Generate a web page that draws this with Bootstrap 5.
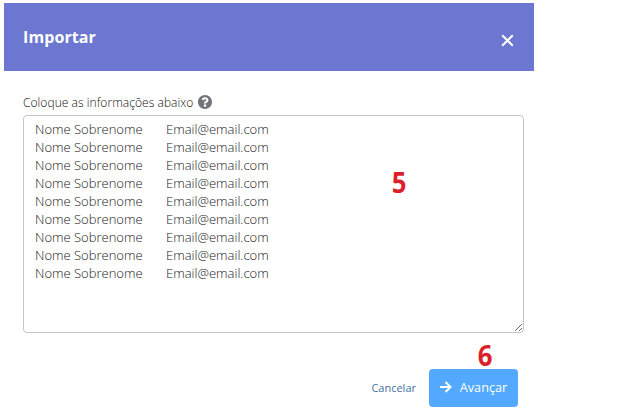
<!DOCTYPE html>
<html lang="pt-BR">
<head>
<meta charset="utf-8">
<meta name="viewport" content="width=device-width, initial-scale=1">
<title>Importar</title>
<link href="https://cdn.jsdelivr.net/npm/bootstrap@5.3.0/dist/css/bootstrap.min.css" rel="stylesheet">
<style>
body{font-family:"Open Sans",sans-serif;background:#fff;overflow:hidden}
.import-dialog{width:530px;height:407px;margin:3px 0 0 4px}
.import-header{height:68px;background:#6b77d0;padding:0 20px 0 19px}
.import-title{font-size:16px;font-weight:700;line-height:22px;letter-spacing:.1px}
.import-close{line-height:0;margin-top:6px}
.import-body{padding:23px 10px 0 19px}
.import-label{font-size:12px;font-weight:300;line-height:18px;letter-spacing:.05px;color:#111;gap:5px}
.import-label svg{margin-bottom:2px}
.import-text{height:218px;margin-top:3px;font-size:13px;font-weight:300;line-height:18px;padding:4px 11px;color:#222;border:1px solid #c4c4c4;border-radius:4px;tab-size:131px;resize:vertical}
.import-footer{margin-top:36px;padding-right:16px;gap:13px}
.import-cancel{font-size:11px;color:#44729e}
.import-next{width:89px;height:38px;font-size:12.7px;background:#52a9ff;color:#fff;border-radius:4px;gap:8px}
.import-next svg{margin-bottom:2px}
.step-mark{position:absolute;font-size:28px;line-height:30px;font-weight:700;color:#dc1f2b;transform:scaleX(.92)}
.step-five{left:391px;top:167px}
.step-six{left:477px;top:340px}
</style>
<script src="https://cdn.jsdelivr.net/npm/bootstrap@5.3.0/dist/js/bootstrap.bundle.min.js"></script>
</head>
<body>
<main class="import-dialog">
  <header class="import-header d-flex align-items-center justify-content-between text-white">
    <h1 class="import-title mb-0">Importar</h1>
    <button class="import-close btn p-0 border-0 text-white" type="button" aria-label="Fechar">
      <svg width="13" height="13" viewBox="0 0 13 13" fill="none" stroke="currentColor" stroke-width="2"><path d="M1.2 1.2l10.6 10.6M11.8 1.2L1.2 11.8"/></svg>
    </button>
  </header>
  <div class="import-body">
    <label class="import-label d-flex align-items-center" for="lista">Coloque as informações abaixo
      <svg width="14" height="14" viewBox="8 8 496 496" fill="#73737b"><path d="M504 256c0 136.997-111.043 248-248 248S8 392.997 8 256C8 119.083 119.043 8 256 8s248 111.083 248 248zM262.655 90c-54.497 0-89.255 22.957-116.549 63.758-3.536 5.286-2.353 12.415 2.715 16.258l34.699 26.31c5.205 3.947 12.621 3.008 16.665-2.122 17.864-22.658 30.113-35.797 57.303-35.797 20.429 0 45.698 13.148 45.698 32.958 0 14.976-12.363 22.667-32.534 33.976C247.128 238.528 216 254.941 216 296v4c0 6.627 5.373 12 12 12h56c6.627 0 12-5.373 12-12v-1.333c0-28.462 83.186-29.647 83.186-106.667 0-58.002-60.165-102-116.531-102zM256 338c-25.365 0-46 20.635-46 46 0 25.364 20.635 46 46 46s46-20.636 46-46c0-25.364-20.635-46-46-46z"/></svg>
    </label>
    <textarea id="lista" class="import-text form-control" spellcheck="false">Nome Sobrenome&#9;Email@email.com
Nome Sobrenome&#9;Email@email.com
Nome Sobrenome&#9;Email@email.com
Nome Sobrenome&#9;Email@email.com
Nome Sobrenome&#9;Email@email.com
Nome Sobrenome&#9;Email@email.com
Nome Sobrenome&#9;Email@email.com
Nome Sobrenome&#9;Email@email.com
Nome Sobrenome&#9;Email@email.com</textarea>
  </div>
  <footer class="import-footer d-flex align-items-center justify-content-end">
    <a class="import-cancel text-decoration-none" href="#">Cancelar</a>
    <button class="import-next btn border-0 p-0 d-flex align-items-center justify-content-center" type="button">
      <svg width="12" height="12" viewBox="0 0 12 12" fill="none" stroke="currentColor" stroke-width="2"><path d="M0 6h10.5M5.5 1l5 5-5 5"/></svg>
      <span>Avançar</span>
    </button>
  </footer>
</main>
<span class="step-mark step-five">5</span>
<span class="step-mark step-six">6</span>
</body>
</html>
